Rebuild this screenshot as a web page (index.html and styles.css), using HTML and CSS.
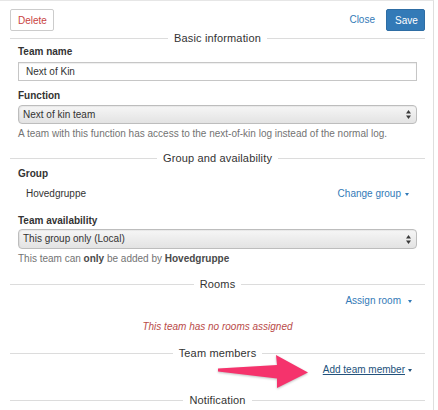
FILE: index.html
```html
<!DOCTYPE html>
<html>
<head>
<meta charset="utf-8">
<link rel="stylesheet" href="styles.css">
</head>
<body>
<div class="panel">
  <div class="toolbar">
    <button class="btn btn-delete">Delete</button>
    <div class="actions">
      <a class="link-close">Close</a>
      <button class="btn btn-save">Save</button>
    </div>
  </div>

  <div class="legend lg-basic"><span>Basic information</span></div>
  <div class="section">
    <div class="label lb-team">Team name</div>
    <div class="input">Next of Kin</div>
    <div class="label lb-func">Function</div>
    <div class="select sel-func">
      <span>Next of kin team</span>
      <svg class="updown" width="5" height="9" viewBox="0 0 5 9"><polygon points="0,3.5 2.5,0 5,3.5" /><polygon points="0,5.5 5,5.5 2.5,9" /></svg>
    </div>
    <div class="help help-func">A team with this function has access to the next-of-kin log instead of the normal log.</div>
  </div>

  <div class="legend lg-group"><span>Group and availability</span></div>
  <div class="section">
    <div class="label lb-group">Group</div>
    <div class="row row-group">
      <span class="static">Hovedgruppe</span>
      <a class="dd-link dd-group">Change group<i class="caret"></i></a>
    </div>
    <div class="label lb-avail">Team availability</div>
    <div class="select sel-avail">
      <span>This group only (Local)</span>
      <svg class="updown" width="5" height="9" viewBox="0 0 5 9"><polygon points="0,3.5 2.5,0 5,3.5" /><polygon points="0,5.5 5,5.5 2.5,9" /></svg>
    </div>
    <div class="help help-avail">This team can <b>only</b> be added by <b>Hovedgruppe</b></div>
  </div>

  <div class="legend lg-rooms"><span>Rooms</span></div>
  <div class="section">
    <div class="row row-assign">
      <a class="dd-link dd-room">Assign room<i class="caret"></i></a>
    </div>
    <div class="empty">This team has no rooms assigned</div>
  </div>

  <div class="legend lg-members"><span>Team members</span></div>
  <div class="section">
    <div class="row row-add">
      <a class="dd-link dd-add">Add team member<i class="caret"></i></a>
    </div>
  </div>

  <div class="legend lg-notif"><span>Notification</span></div>
</div>

<svg class="arrow" width="438" height="410" viewBox="0 0 438 410">
  <polygon points="218,368.5 277,365 276,355 308,372.5 277,388 277,378.5 218,371.5" />
</svg>
</body>
</html>
```

FILE: styles.css
```css
html, body {
  margin: 0;
  padding: 0;
  background: #ffffff;
}

body {
  font-family: "Liberation Sans", Arial, Helvetica, sans-serif;
  font-size: 10px;
  line-height: 14px;
  color: #333333;
  position: relative;
  width: 438px;
  height: 410px;
  overflow: hidden;
}

.panel {
  width: 434px;
  height: 410px;
  box-sizing: border-box;
  border-top: 1px solid #e6e6e6;
  border-right: 1px solid #dedede;
  padding: 8px 8px 0 10px;
}

.toolbar {
  display: flex;
  justify-content: space-between;
  align-items: center;
  height: 22px;
}

.actions {
  display: flex;
  align-items: center;
}

.btn {
  font-family: inherit;
  font-size: 10px;
  height: 22px;
  margin: 0;
  box-sizing: border-box;
  cursor: pointer;
}

.btn-delete {
  background: #ffffff;
  color: #c9433f;
  border: 1px solid #cccccc;
  border-radius: 2px;
  padding: 0 7px;
  width: 44px;
}

.btn-save {
  background: #337ab7;
  color: #ffffff;
  border: 1px solid #2e6da4;
  border-radius: 2px;
  padding: 0 8px;
  width: 39px;
}

.link-close {
  color: #337ab7;
  margin-right: 11px;
}

.legend {
  display: flex;
  align-items: center;
  height: 14px;
  font-size: 11px;
  letter-spacing: 0.15px;
  color: #333333;
}

.legend::before,
.legend::after {
  content: "";
  flex: 1;
  border-top: 1px solid #dcdcdc;
}

.legend span {
  padding: 0 6px;
}

.lg-group { margin-top: 10px; }
.lg-rooms { margin-top: 11px; }
.lg-members { margin-top: 12px; }
.lg-notif { margin-top: 16px; }

.section {
  padding: 0 8px;
}

.label {
  font-weight: bold;
  height: 14px;
}

.lb-team { margin-top: 0; }
.lb-func { margin-top: 8px; }
.lb-group { margin-top: 2px; }
.lb-avail { margin-top: 13px; }

.input {
  margin-top: 3px;
  height: 19px;
  box-sizing: border-box;
  border: 1px solid #c6c6c6;
  box-shadow: inset 0 1px 1px rgba(0, 0, 0, 0.07);
  padding: 0 7px;
  line-height: 17px;
}

.select {
  display: flex;
  justify-content: space-between;
  align-items: center;
  box-sizing: border-box;
  border: 1px solid #bdbdbd;
  border-radius: 4px;
  background: linear-gradient(to bottom, #f6f6f6, #e3e3e3);
  box-shadow: inset 1px 1px 1px rgba(0, 0, 0, 0.06);
  padding: 0 5px 0 4px;
}

.sel-func {
  margin-top: 2px;
  height: 19px;
}

.sel-avail {
  margin-top: 1px;
  height: 20px;
}

.updown polygon {
  fill: #3a3a3a;
}

.help {
  color: #737373;
  margin-top: 3px;
  height: 14px;
}

.help b {
  color: #4a4a4a;
}

.row {
  display: flex;
  justify-content: flex-end;
  align-items: center;
  height: 14px;
}

.row-group {
  justify-content: space-between;
  margin-top: 6px;
}

.static {
  padding-left: 8px;
}

.row-assign { margin-top: 3px; }
.row-add { margin-top: 3px; }

.dd-link {
  color: #337ab7;
  display: inline-flex;
  align-items: center;
}

.dd-group { margin-right: 8px; }
.dd-room { margin-right: 5px; }
.dd-add {
  margin-right: 5px;
  color: #23527c;
  text-decoration: underline;
}

.caret {
  display: inline-block;
  width: 0;
  height: 0;
  border-top: 3px solid currentColor;
  border-left: 2px solid transparent;
  border-right: 2px solid transparent;
  margin-left: 4px;
}

.dd-room .caret { margin-left: 7px; }
.dd-add .caret { margin-left: 3px; }

.empty {
  margin-top: 12px;
  text-align: center;
  color: #b94a48;
  font-style: italic;
  height: 14px;
}

.arrow {
  position: absolute;
  left: 0;
  top: 0;
  pointer-events: none;
  filter: drop-shadow(0 1px 1px rgba(0, 0, 0, 0.25));
}

.arrow polygon {
  fill: #f5336c;
}
```
